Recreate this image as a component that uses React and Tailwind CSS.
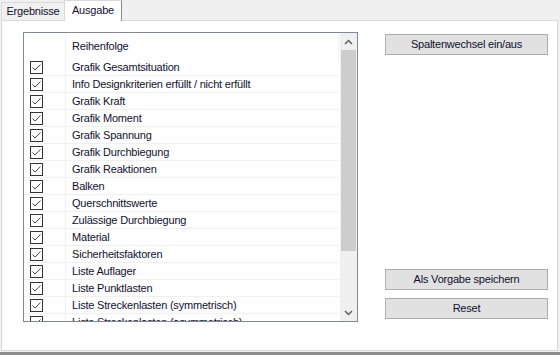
import React from "react";

const items = [
  "Grafik Gesamtsituation",
  "Info Designkriterien erfüllt / nicht erfüllt",
  "Grafik Kraft",
  "Grafik Moment",
  "Grafik Spannung",
  "Grafik Durchbiegung",
  "Grafik Reaktionen",
  "Balken",
  "Querschnittswerte",
  "Zulässige Durchbiegung",
  "Material",
  "Sicherheitsfaktoren",
  "Liste Auflager",
  "Liste Punktlasten",
  "Liste Streckenlasten (symmetrisch)",
  "Liste Streckenlasten (asymmetrisch)",
];

function Check() {
  return (
    <div className="w-[13px] h-[13px] border border-[#333333] bg-white flex items-center justify-center">
      <svg width="11" height="11" viewBox="0 0 11 11">
        <path d="M1.5 5.5 L4 8 L9.5 2.5" fill="none" stroke="#4a4a4a" strokeWidth="1" />
      </svg>
    </div>
  );
}

function Btn({ children }) {
  return (
    <div className="h-[21px] w-[163px] bg-[#e1e1e1] border border-[#adadad] flex items-center justify-center text-[#10102e]">
      {children}
    </div>
  );
}

export default function App() {
  return (
    <div className="w-[560px] h-[355px] bg-[#f0f0f0] flex flex-col font-['Liberation_Sans',sans-serif] text-[11px] tracking-[-0.2px] text-[#10102e] overflow-hidden">
      <div className="flex h-[20px] items-end relative z-10">
        <div className="h-[18px] w-[63px] ml-[1px] border-t border-l border-[#d9d9d9] bg-[#f0f0f0] flex items-center justify-center">
          Ergebnisse
        </div>
        <div className="h-[21px] w-[58px] -mb-[1px] border-t border-l border-r border-l-[#d9d9d9] border-t-[#d9d9d9] border-r-[#8a8a8a] bg-white flex items-center justify-center pb-[1px]">
          Ausgabe
        </div>
      </div>
      <div className="ml-[1px] w-[557px] h-[331px] bg-white border border-[#d9d9d9] flex pt-[11px] pl-[21px]">
        <div className="w-[335px] h-[290px] border border-[#828790] flex">
          <div className="w-[316px] h-full overflow-hidden">
            <div className="w-[315px] h-[26px] flex">
              <div className="w-[42px] h-full border-r border-[#f0f0f0]" />
              <div className="flex-1 h-full border-r border-[#f0f0f0] flex items-center pl-[6px] pt-[1px]">
                Reihenfolge
              </div>
            </div>
            {items.map((t) => (
              <div key={t} className="w-[315px] h-[17px] flex border-b border-[#f0f0f0]">
                <div className="w-[42px] h-full border-r border-[#f0f0f0] flex items-center pl-[6px]">
                  <Check />
                </div>
                <div className="flex-1 flex items-center pl-[6px] whitespace-nowrap">{t}</div>
              </div>
            ))}
          </div>
          <div className="w-[17px] h-full bg-[#f0f0f0] flex flex-col">
            <div className="h-[17px] flex items-center justify-center">
              <svg width="9" height="6" viewBox="0 0 9 6">
                <path d="M1 5 L4.5 1.5 L8 5" fill="none" stroke="#606060" strokeWidth="1.5" />
              </svg>
            </div>
            <div className="h-[201px] mx-[1px] bg-[#cdcdcd]" />
            <div className="flex-1" />
            <div className="h-[17px] flex items-center justify-center">
              <svg width="9" height="6" viewBox="0 0 9 6">
                <path d="M1 1 L4.5 4.5 L8 1" fill="none" stroke="#606060" strokeWidth="1.5" />
              </svg>
            </div>
          </div>
        </div>
        <div className="ml-[27px] mt-[2px] h-[285px] flex flex-col">
          <Btn>Spaltenwechsel ein/aus</Btn>
          <div className="mt-auto flex flex-col gap-[8px]">
            <Btn>Als Vorgabe speichern</Btn>
            <Btn>Reset</Btn>
          </div>
        </div>
      </div>
      <div className="h-[1px]" />
      <div className="h-[3px] bg-[#8c8c8c]" />
    </div>
  );
}
